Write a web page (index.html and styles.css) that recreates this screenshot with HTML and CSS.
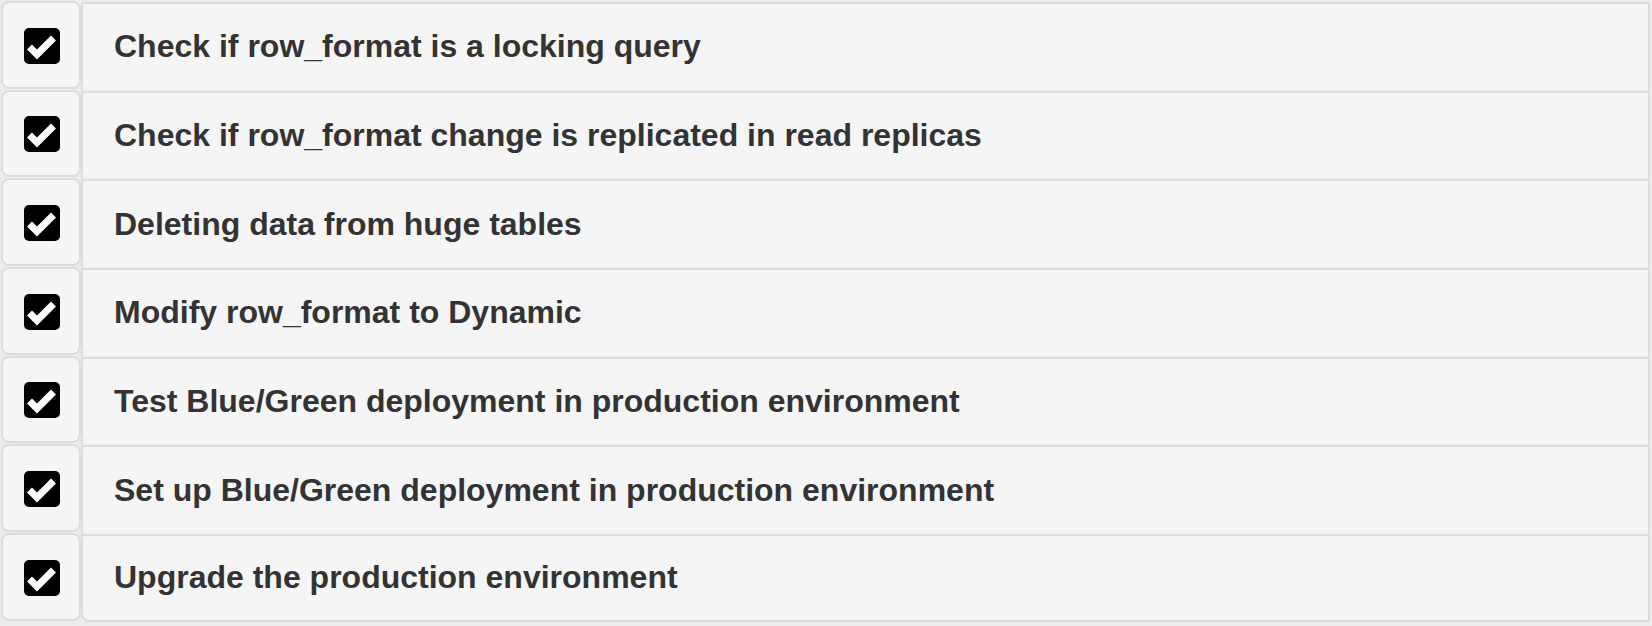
FILE: index.html
```html
<!DOCTYPE html>
<html lang="en">
<head>
<meta charset="utf-8">
<title>Checklist</title>
<link rel="stylesheet" href="styles.css">
</head>
<body>
<ul class="checklist">
  <li class="item">
    <span class="box"><svg class="tick" viewBox="0 0 36 36" width="36" height="36"><rect width="36" height="36" rx="5" fill="#000"/><polyline points="5.5,19 13,26.5 29.5,10" fill="none" stroke="#fff" stroke-width="7"/></svg></span>
    <span class="label">Check if row_format is a locking query</span>
  </li>
  <li class="item">
    <span class="box"><svg class="tick" viewBox="0 0 36 36" width="36" height="36"><rect width="36" height="36" rx="5" fill="#000"/><polyline points="5.5,19 13,26.5 29.5,10" fill="none" stroke="#fff" stroke-width="7"/></svg></span>
    <span class="label">Check if row_format change is replicated in read replicas</span>
  </li>
  <li class="item">
    <span class="box"><svg class="tick" viewBox="0 0 36 36" width="36" height="36"><rect width="36" height="36" rx="5" fill="#000"/><polyline points="5.5,19 13,26.5 29.5,10" fill="none" stroke="#fff" stroke-width="7"/></svg></span>
    <span class="label">Deleting data from huge tables</span>
  </li>
  <li class="item">
    <span class="box"><svg class="tick" viewBox="0 0 36 36" width="36" height="36"><rect width="36" height="36" rx="5" fill="#000"/><polyline points="5.5,19 13,26.5 29.5,10" fill="none" stroke="#fff" stroke-width="7"/></svg></span>
    <span class="label">Modify row_format to Dynamic</span>
  </li>
  <li class="item">
    <span class="box"><svg class="tick" viewBox="0 0 36 36" width="36" height="36"><rect width="36" height="36" rx="5" fill="#000"/><polyline points="5.5,19 13,26.5 29.5,10" fill="none" stroke="#fff" stroke-width="7"/></svg></span>
    <span class="label">Test Blue/Green deployment in production environment</span>
  </li>
  <li class="item">
    <span class="box"><svg class="tick" viewBox="0 0 36 36" width="36" height="36"><rect width="36" height="36" rx="5" fill="#000"/><polyline points="5.5,19 13,26.5 29.5,10" fill="none" stroke="#fff" stroke-width="7"/></svg></span>
    <span class="label">Set up Blue/Green deployment in production environment</span>
  </li>
  <li class="item">
    <span class="box"><svg class="tick" viewBox="0 0 36 36" width="36" height="36"><rect width="36" height="36" rx="5" fill="#000"/><polyline points="5.5,19 13,26.5 29.5,10" fill="none" stroke="#fff" stroke-width="7"/></svg></span>
    <span class="label">Upgrade the production environment</span>
  </li>
</ul>
</body>
</html>
```

FILE: styles.css
```css
html, body {
  margin: 0;
  padding: 0;
  background: #ececec;
}

.checklist {
  list-style: none;
  margin: 0;
  padding: 1px 2px 0 1px;
  display: grid;
  grid-auto-rows: 88.67px;
  font-family: "Liberation Sans", Arial, Helvetica, sans-serif;
}

.item {
  display: flex;
  align-items: stretch;
}

.box {
  box-sizing: border-box;
  width: 80px;
  flex: none;
  height: calc(100% - 1px);
  border: 2px solid #dddddd;
  border-radius: 8px;
  background: #f5f5f5;
  display: flex;
  align-items: center;
  justify-content: center;
  padding: 2px 0 0 2px;
}

.tick {
  display: block;
}

.label {
  flex: 1;
  box-sizing: border-box;
  border: 2px solid #dddddd;
  border-bottom: none;
  background: #f5f5f5;
  display: flex;
  align-items: center;
  padding: 0 0 0 31px;
  margin-top: 1px;
  font-weight: bold;
  font-size: 32px;
  color: #333333;
}

.item:last-child .label {
  border-bottom: 2px solid #dddddd;
  border-bottom-left-radius: 8px;
}
```
